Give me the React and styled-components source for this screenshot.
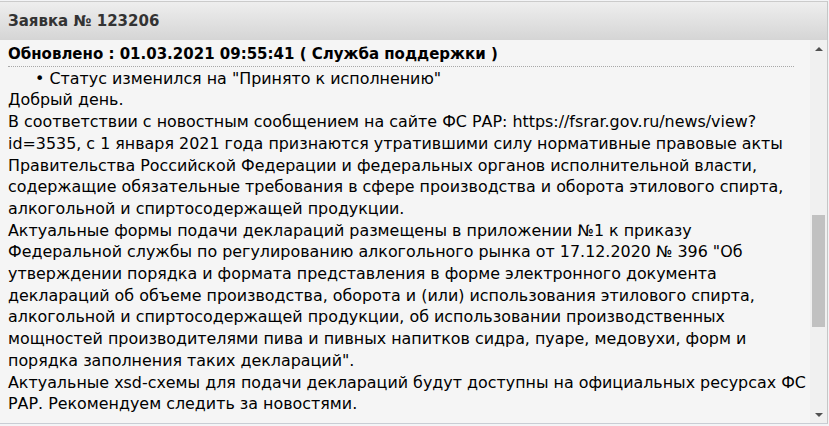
import React from "react";
import styled, { createGlobalStyle } from "styled-components";

const GlobalStyle = createGlobalStyle`
  html, body {
    margin: 0;
    padding: 0;
    background: #f3f4f6;
  }
  body {
    font-family: "DejaVu Sans", Verdana, sans-serif;
  }
`;

const ticket = {
  number: "123206",
  updated: "01.03.2021 09:55:41",
  author: "Служба поддержки",
  status: "Принято к исполнению",
  paragraphs: [
    ["Добрый день."],
    [
      "В соответствии с новостным сообщением на сайте ФС РАР: https://fsrar.gov.ru/news/view?",
      "id=3535, с 1 января 2021 года признаются утратившими силу нормативные правовые акты",
      "Правительства Российской Федерации и федеральных органов исполнительной власти,",
      "содержащие обязательные требования в сфере производства и оборота этилового спирта,",
      "алкогольной и спиртосодержащей продукции.",
    ],
    [
      "Актуальные формы подачи деклараций размещены в приложении №1 к приказу",
      "Федеральной службы по регулированию алкогольного рынка от 17.12.2020 № 396 \"Об",
      "утверждении порядка и формата представления в форме электронного документа",
      "деклараций об объеме производства, оборота и (или) использования этилового спирта,",
      "алкогольной и спиртосодержащей продукции, об использовании производственных",
      "мощностей производителями пива и пивных напитков сидра, пуаре, медовухи, форм и",
      "порядка заполнения таких деклараций\".",
    ],
    [
      "Актуальные xsd-схемы для подачи деклараций будут доступны на официальных ресурсах ФС",
      "РАР. Рекомендуем следить за новостями.",
    ],
  ],
};

export default function App() {
  return (
    <>
      <GlobalStyle />
      <Panel>
        <Header>Заявка № {ticket.number}</Header>
        <Body>
          <Content>
            <UpdateTitle>
              Обновлено : {ticket.updated} ( {ticket.author} )
            </UpdateTitle>
            <Status>• Статус изменился на "{ticket.status}"</Status>
            {ticket.paragraphs.map((lines, i) => (
              <Paragraph key={i}>
                {lines.map((l, j) => (
                  <Line key={j}>{l}</Line>
                ))}
              </Paragraph>
            ))}
          </Content>
          <ScrollBar>
            <Arrow $dir="up" />
            <Track>
              <Thumb $offset={158} $size={112} />
            </Track>
            <Arrow $dir="down" />
          </ScrollBar>
        </Body>
      </Panel>
    </>
  );
}

const Panel = styled.div`
  margin-top: 1px;
  width: 827px;
  border-top: 1px solid #cbcbcb;
  border-right: 1px solid #c6c6c6;
  border-bottom: 1px solid #c9cdd4;
  display: flex;
  flex-direction: column;
`;

const Header = styled.div`
  height: 38px;
  line-height: 38px;
  padding-left: 8px;
  background: linear-gradient(to bottom, #eeeeee, #d5d5d5);
  color: #333;
  font-weight: bold;
  font-size: 15px;
`;

const Body = styled.div`
  height: 383px;
  display: flex;
  background: #f5f5f5;
`;

const Content = styled.div`
  flex: 1;
  overflow: hidden;
  padding: 4px 16px 0 8px;
  color: #000;
  font-size: 15.9px;
  line-height: 21.7px;
`;

const UpdateTitle = styled.div`
  font-weight: bold;
  font-size: 15px;
  border-bottom: 1px dotted #a8a8a8;
  margin-bottom: 1px;
`;

const Status = styled.div`
  padding-left: 27px;
  white-space: nowrap;
`;

const Paragraph = styled.p`
  margin: 0;
`;

const Line = styled.span`
  display: block;
  white-space: nowrap;
`;

const ScrollBar = styled.div`
  width: 17px;
  background: #f0f0f0;
  display: flex;
  flex-direction: column;
`;

const Arrow = styled.div`
  height: 17px;
  display: flex;
  align-items: center;
  justify-content: center;

  &::before {
    content: "";
    width: 0;
    height: 0;
    border-left: 4px solid transparent;
    border-right: 4px solid transparent;
    ${(p) =>
      p.$dir === "up"
        ? "border-bottom: 4px solid #505050;"
        : "border-top: 4px solid #505050;"}
  }
`;

const Track = styled.div`
  flex: 1;
  padding: 0 2px;
`;

const Thumb = styled.div`
  margin-top: ${(p) => p.$offset}px;
  height: ${(p) => p.$size}px;
  background: #c1c1c1;
`;
